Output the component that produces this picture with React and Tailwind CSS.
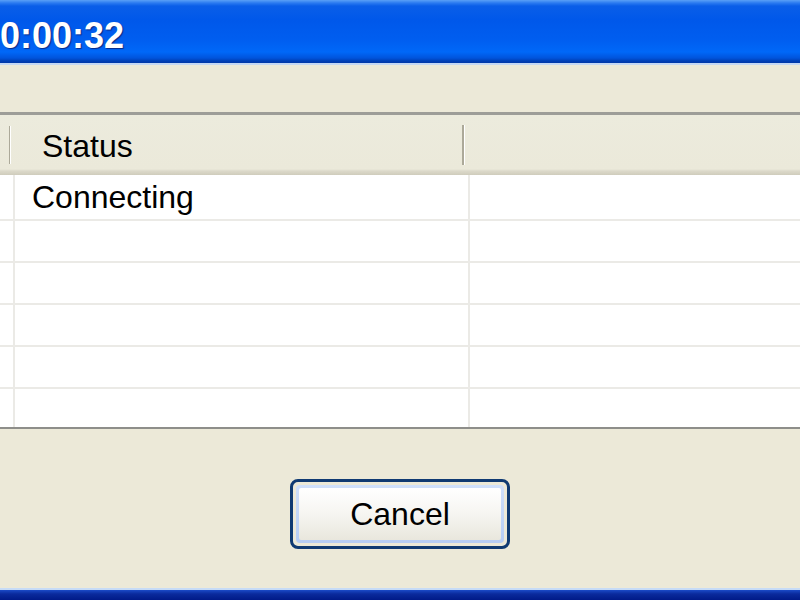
import React from "react";

const rows = ["Connecting", "", "", "", "", ""];

export default function App() {
  return (
    <div
      className="w-[800px] h-[600px] flex flex-col bg-[#ece9d8] overflow-hidden"
      style={{ fontFamily: '"Liberation Sans", Arial, sans-serif' }}
    >
      {/* title bar */}
      <div className="h-[63px] shrink-0 flex items-center bg-[linear-gradient(to_bottom,#5aa0f6_0px,#2a7af0_3px,#0a5ee8_6px,#0058ea_20px,#005ef0_40px,#0068f8_52px,#0054dc_58px,#003fb4_61px,#0038a8_63px)]">
        <span className="mt-[8px] text-white font-bold text-[36px] leading-none [text-shadow:1px_1px_1px_#0a2a88]">
          0:00:32
        </span>
      </div>
      <div className="h-[2px] shrink-0 bg-[#c4d8f4]" />

      {/* empty space above list */}
      <div className="h-[47px] shrink-0" />

      {/* list view */}
      <div className="shrink-0 border-t-[3px] border-[#9d9d98] bg-white flex flex-col">
        {/* header */}
        <div className="h-[60px] flex bg-[linear-gradient(to_bottom,#ecebdd_0px,#ebe9da_54px,#dcd9ca_56px,#cfccbc_60px)]">
          <div className="w-[11px] shrink-0 flex items-center justify-end">
            <div className="w-[2px] h-[38px] bg-[#aca999] border-r border-white" />
          </div>
          <div className="w-[454px] shrink-0 flex items-center justify-between pl-[31px]">
            <span className="text-[32px] leading-none text-black mt-[2px]">Status</span>
            <div className="w-[3px] h-[40px] bg-[#aca999] border-r border-white" />
          </div>
          <div className="flex-1" />
        </div>

        {/* rows */}
        {rows.map((r, i) => (
          <div
            key={i}
            className={`flex ${i === 5 ? "h-[38px]" : i === 0 ? "h-[46px] border-b-2 border-[#ebeae6]" : "h-[42px] border-b-2 border-[#ebeae6]"}`}
          >
            <div className="w-[15px] shrink-0 border-r-2 border-[#ebeae6]" />
            <div className="w-[455px] shrink-0 border-r-2 border-[#ebeae6] flex items-center pl-[17px]">
              <span className="text-[32px] leading-none text-black">{r}</span>
            </div>
            <div className="flex-1" />
          </div>
        ))}
      </div>
      <div className="h-[2px] shrink-0 bg-[#8e8e8a]" />

      {/* button area */}
      <div className="flex-1 flex justify-center pt-[50px]">
        <button className="w-[220px] h-[70px] rounded-[8px] border-[3px] border-[#0f3a72] p-[3px] bg-[#ece9d8]">
          <div className="w-full h-full rounded-[4px] bg-[linear-gradient(to_bottom,#cfe0fb,#b6cdf4)] p-[3px]">
            <div className="w-full h-full rounded-[2px] bg-[linear-gradient(to_bottom,#ffffff_0%,#f6f5f1_50%,#e9e7dd_100%)] flex items-center justify-center">
              <span className="text-[32px] leading-none text-black">Cancel</span>
            </div>
          </div>
        </button>
      </div>

      {/* bottom window frame */}
      <div className="h-[2px] shrink-0 bg-[#c6dbf6]" />
      <div className="h-[10px] shrink-0 bg-[linear-gradient(to_bottom,#1a4ac8,#0a2a9c_4px,#001a88)]" />
    </div>
  );
}
